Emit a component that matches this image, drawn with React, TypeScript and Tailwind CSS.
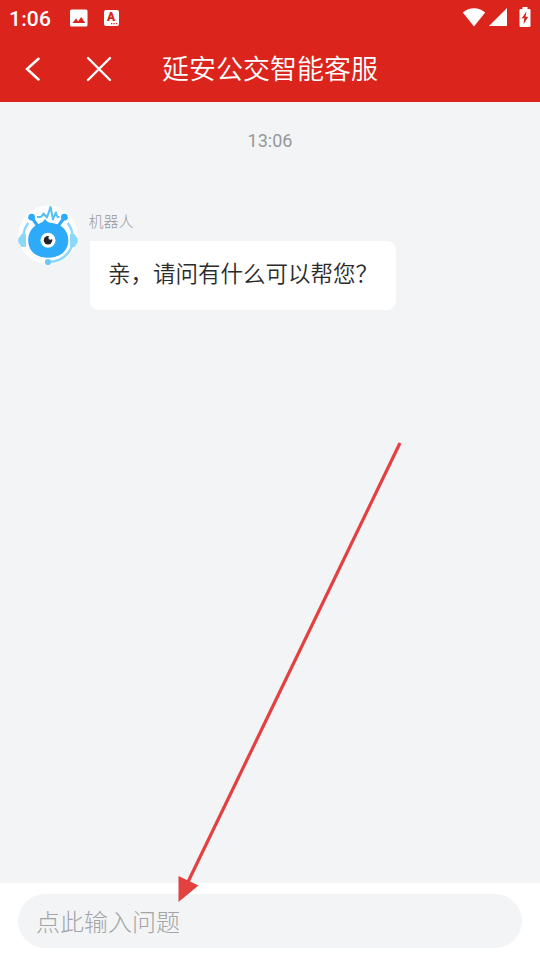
import { useState } from 'react';

function StatusBar() {
  return (
    <div className="flex h-9 items-center pl-[9px] pr-[9px]">
      <span className="font-[Roboto] text-[21px] leading-9 font-medium tracking-[0.2px] pt-px">1:06</span>
      {/* Picture notification */}
      <svg className="ml-[18.5px] h-[18px] w-[18px] shrink-0" viewBox="0 0 18 18">
        <rect x="0" y="0.5" width="17.5" height="17" rx="1.5" fill="#fff" />
        <path d="M2.5 14 6 9.5l2.2 2.7 3-4.2 4.1 6z" fill="#db241c" />
      </svg>
      {/* Keyboard notification */}
      <div className="relative ml-4 flex h-4 w-[15px] shrink-0 justify-center rounded-[2px] bg-white font-[Roboto] text-[12px] leading-[15px] font-black text-[#db241c]">
        A
        <svg className="absolute bottom-[1px] right-[1px] h-[2px] w-[7px]" viewBox="0 0 7 2">
          <path d="M0 0h1.3v1.3H0zM2.5 0h1.3v1.3H2.5zM5 0h1.3v1.3H5z" fill="#db241c" />
        </svg>
      </div>
      <div className="ml-auto flex items-center pb-[2px]">
        <svg className="h-[19px] w-6" viewBox="0 0 24 19" fill="#fff">
          <path d="M12 18.5 23.2 4.6C20 1.6 16 .2 12 .2S4 1.6.8 4.6z" />
        </svg>
        <svg className="ml-[3px] h-[18px] w-[18px]" viewBox="0 0 18 18" fill="#fff">
          <path d="M0 18 18 0v18z" />
        </svg>
        <svg className="ml-3 h-5 w-3" viewBox="0 0 12 20">
          <path d="M3.5 0h5v2H10.5Q11.5 2 11.5 3V19Q11.5 20 10.5 20H1.5Q.5 20 .5 19V3Q.5 2 1.5 2H3.5z" fill="#fff" />
          <path d="M7.4 4.5 2.8 11.2H5.3L4.5 17.3 9.2 9.8H6.6z" fill="#db241c" />
        </svg>
      </div>
    </div>
  );
}

function RobotAvatar() {
  return (
    <svg className="h-[60px] w-[60px] shrink-0" viewBox="0 0 60 60" fill="none">
      <circle cx="30" cy="30" r="29.5" fill="#fff" />
      {/* Headset */}
      <path d="M10.3 18Q6 23.5 5.5 30" stroke="#8bd8fa" strokeWidth="2.4" />
      <path d="M49.7 18Q54 23.5 54.5 30" stroke="#8bd8fa" strokeWidth="2.4" />
      <path d="M8 29v13H4Q2.5 42 2.2 39.8Q.2 39 .2 35.5Q.2 32 2.2 31.2Q2.5 29 4 29z" fill="#8bd8fa" />
      <path d="M52 29v13h4Q57.5 42 57.8 39.8Q59.8 39 59.8 35.5Q59.8 32 57.8 31.2Q57.5 29 56 29z" fill="#8bd8fa" />
      <path d="M54 41Q48 56 31 57" stroke="#8bd8fa" strokeWidth="2.6" />
      {/* Antennae */}
      <path d="m14 13 6.5 9M46 13l-6.5 9" stroke="#2daafa" strokeWidth="3" />
      <circle cx="13.6" cy="12.2" r="3.4" fill="#2daafa" />
      <circle cx="46.4" cy="12.2" r="3.4" fill="#2daafa" />
      <path d="M19 12h4l2.5-3.5 3.5 4 3.5-10.5 2.5 12.5 2.8-7 1.7 4.5h2" stroke="#55bff9" strokeWidth="2" strokeLinejoin="round" />
      {/* Body */}
      <path d="M27 14Q29.5 17.8 34 18C44 19 50.3 26 50.3 35.3C50.3 46 42 52.8 30 52.8S10.2 46 10.2 35.3C10.2 27 15 21 21 18.8Q25 17.5 27 14z" fill="#2daafa" />
      <circle cx="30" cy="35.3" r="7.5" fill="#fff" />
      <circle cx="30" cy="35.3" r="4.2" fill="#20242a" />
      <circle cx="32.4" cy="32.8" r="2" fill="#fff" />
      <circle cx="30" cy="57" r="3.1" fill="#6ac8f8" />
    </svg>
  );
}

export default function App() {
  const [question, setQuestion] = useState('');

  return (
    <div className="relative flex h-[960px] w-[540px] flex-col overflow-hidden bg-[#f2f4f6] font-['Noto_Sans_CJK_SC',sans-serif]">
      <header className="h-[102px] shrink-0 bg-[#db241c] text-white">
        <StatusBar />
        <div className="grid h-[66px] grid-cols-[162px_216px_162px] items-center">
          <div className="flex items-center pl-[25px]">
            <button aria-label="返回">
              <svg className="h-6 w-4" viewBox="0 0 16 24" fill="none" stroke="#fff" strokeWidth="2.5" strokeLinecap="round">
                <path d="M13.5 1.8 2 12l11.5 10.5" />
              </svg>
            </button>
            <button aria-label="关闭" className="ml-[45px]">
              <svg className="h-[26px] w-[26px]" viewBox="0 0 26 26" fill="none" stroke="#fff" strokeWidth="2.4" strokeLinecap="round">
                <path d="m2 2 22 22M24 2 2 24" />
              </svg>
            </button>
          </div>
          <h1 className="text-center text-[27px] leading-[64px] font-[350] whitespace-nowrap pb-[2px]">延安公交智能客服</h1>
        </div>
      </header>

      <main className="flex-1">
        <p className="pt-[27px] text-center font-[Roboto] text-[18px] leading-6 text-[#97989a]">13:06</p>
        <div className="flex pt-[52px] pl-[18px]">
          <RobotAvatar />
          <div className="ml-3">
            <p className="-ml-[1.5px] pt-[5px] text-[15px] leading-[22px] font-light text-[#999]">机器人</p>
            <div className="mt-[9px] h-[69px] w-[306px] rounded-[9px] rounded-tl-none bg-white pl-[18px] text-[22.5px] leading-[63px] font-[350] whitespace-nowrap text-[#2b2b2b]">
              亲，请问有什么可以帮您？
            </div>
          </div>
        </div>
      </main>

      <footer className="h-[77px] shrink-0 bg-white px-[18px] pt-[11px]">
        <input
          value={question}
          onChange={(e) => setQuestion(e.target.value)}
          placeholder="点此输入问题"
          className="block h-[54px] w-full rounded-full bg-[#f2f4f6] px-[18px] pb-[2px] text-[24px] font-light text-[#222] outline-none placeholder:text-[#a4a5a7]"
        />
      </footer>

      {/* Pointer to the question field */}
      <svg className="pointer-events-none absolute top-[440px] left-[170px] h-[470px] w-[240px]" viewBox="170 440 240 470">
        <path d="M400 443 187 884" stroke="#e34040" strokeWidth="3.2" />
        <path d="M178.5 902V876l20 9.5z" fill="#e34040" />
      </svg>
    </div>
  );
}
